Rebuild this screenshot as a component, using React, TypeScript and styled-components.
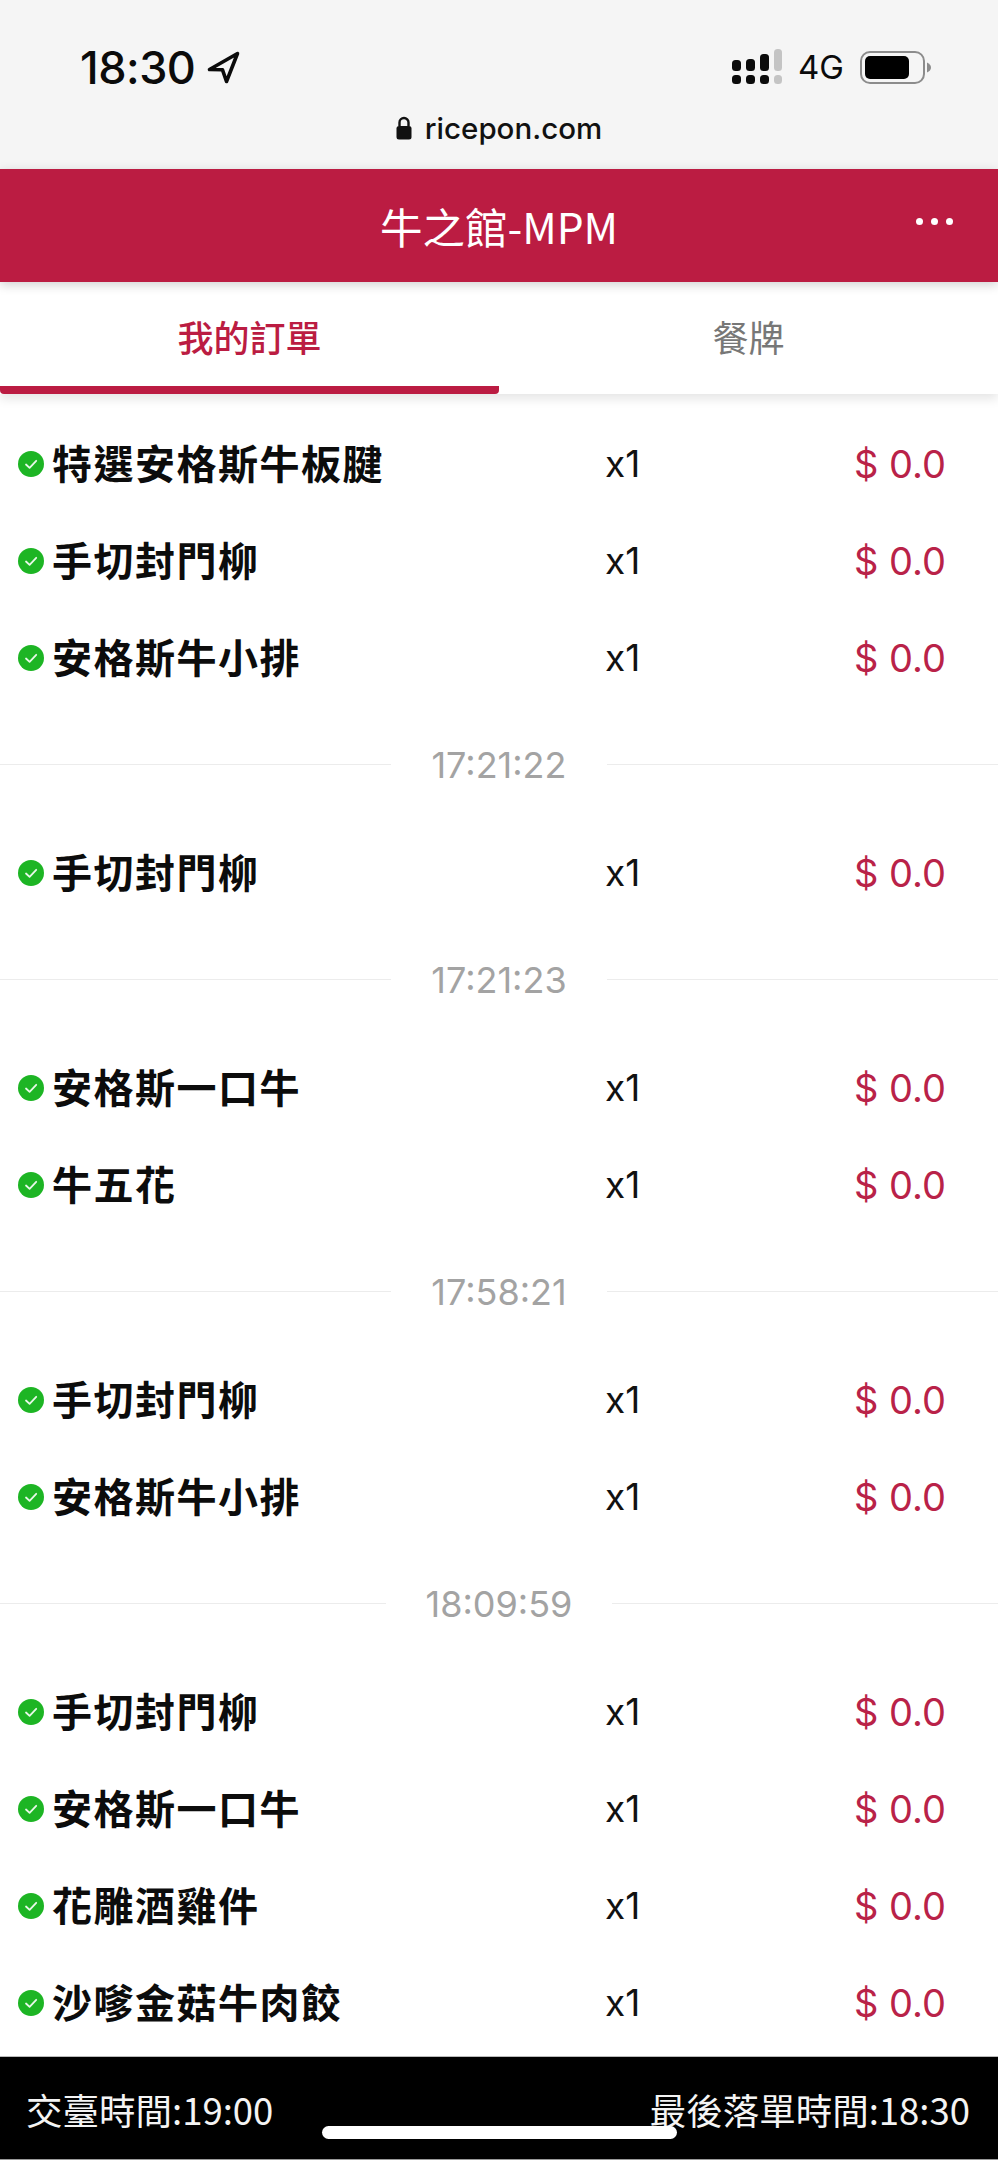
import React from "react"
import styled, { createGlobalStyle } from "styled-components"

const latin = `Inter, "Noto Sans CJK TC", sans-serif`
const cjk = `"Noto Sans CJK TC", Inter, sans-serif`
const red = "#bb1c42"

const GlobalStyle = createGlobalStyle`
  html, body {
    margin: 0;
    padding: 0;
    background: #fff;
  }
`

const Page = styled.div`
  width: 998px;
  height: 2160px;
  display: flex;
  flex-direction: column;
  overflow: hidden;
  position: relative;
  font-family: ${latin};
`

const BrowserChrome = styled.div`
  height: 169px;
  background: #f5f5f5;
  display: flex;
  flex-direction: column;
  flex: none;
`

const StatusRow = styled.div`
  height: 48px;
  margin-top: 43px;
  padding: 0 67px 0 80px;
  display: flex;
  align-items: center;
  justify-content: space-between;
`

const StatusGroup = styled.div`
  display: flex;
  align-items: center;
  gap: ${(props: { $gap: number }) => props.$gap}px;
`

const Clock = styled.span`
  font-size: 45px;
  font-weight: 500;
  color: #0b0b0b;
  letter-spacing: -0.5px;
`

const Network = styled.span`
  font-size: 33px;
  font-weight: 400;
  color: #0b0b0b;
`

const UrlRow = styled.div`
  margin-top: 19px;
  display: flex;
  justify-content: center;
  align-items: center;
  gap: 13px;
  font-size: 29.500px;
  font-weight: 500;
  color: #111;
`

const Header = styled.header`
  height: 113px;
  flex: none;
  background: ${red};
  color: #fff;
  position: relative;
  z-index: 2;
  display: flex;
  align-items: center;
  justify-content: center;
  box-shadow: 0 3px 10px rgba(0, 0, 0, 0.18);
`

const Title = styled.h1`
  margin: 0;
  font-family: ${cjk};
  font-size: 42.500px;
  font-weight: 400;
`

const MoreDots = styled.div`
  position: absolute;
  right: 45px;
  top: 49px;
  display: flex;
  gap: 8px;
`

const Dot = styled.span`
  width: 7px;
  height: 7px;
  border-radius: 50%;
  background: #fff;
`

const Tabs = styled.nav`
  height: 112px;
  flex: none;
  display: grid;
  grid-template-columns: 1fr 1fr;
  background: #fff;
  position: relative;
  z-index: 1;
  box-shadow: 0 5px 10px rgba(0, 0, 0, 0.1);
`

const Tab = styled.div<{ $active?: boolean }>`
  display: flex;
  align-items: center;
  justify-content: center;
  padding-top: 4px;
  font-family: ${cjk};
  font-size: 36px;
  font-weight: ${(props) => (props.$active ? 500 : 400)};
  color: ${(props) => (props.$active ? red : "#777")};
  border-bottom: 8px solid ${(props) => (props.$active ? red : "transparent")};
  border-radius: 0 0 4px 4px;
`

const OrderList = styled.main`
  padding-top: 21px;
  flex: 1;
`

const Row = styled.div`
  height: 97px;
  padding: 0 52px 0 18px;
  display: grid;
  grid-template-columns: 587px 1fr auto;
  align-items: center;
`

const ItemName = styled.div`
  display: flex;
  align-items: center;
  gap: 8px;
  font-family: ${cjk};
  font-size: 40px;
  letter-spacing: 1.500px;
  font-weight: 700;
  color: #0c0c0c;
`

const ItemLabel = styled.span`
  margin-bottom: 3px;
`

const Quantity = styled.span`
  font-size: 37px;
  color: #111;
`

const Price = styled.span`
  font-size: 38px;
  color: #b92248;
`

const Divider = styled.div`
  height: 118px;
  display: flex;
  align-items: center;
  gap: 40px;
  padding-bottom: 1px;
  box-sizing: border-box;

  &::before,
  &::after {
    content: "";
    flex: 1;
    height: 1px;
    background: #ececec;
  }
`

const DividerTime = styled.span`
  font-size: 36px;
  color: #a3a3a3;
`

const Footer = styled.footer`
  height: 104px;
  flex: none;
  box-sizing: border-box;
  background: #000;
  border-top: 1px solid #bbb;
  border-bottom: 1px solid #999;
  padding: 26px 28px 0 26px;
  display: flex;
  justify-content: space-between;
  align-items: flex-start;
  font-family: ${cjk};
  font-size: 36.500px;
  color: #f4f4f4;
  position: relative;
`

const HomeBar = styled.div`
  position: absolute;
  left: 322px;
  top: 69px;
  width: 355px;
  height: 13px;
  border-radius: 7px;
  background: #fff;
`

const CheckIcon = () => (
  <svg width="26" height="26" viewBox="0 0 26 26">
    <circle cx="13" cy="13" r="13" fill="#1db524" />
    <path d="M8 13.500l3.600 3.400L18.200 9.800" fill="none" stroke="#e8f8e8" strokeWidth="1.800" strokeLinecap="round" strokeLinejoin="round" />
  </svg>
)

const LocationArrow = () => (
  <svg width="33" height="33" viewBox="0 0 33 33">
    <path d="M30.500 2.500L2.500 18.500L15.500 18.800L19.500 30.500Z" fill="none" stroke="#0b0b0b" strokeWidth="3.600" strokeLinejoin="round" />
  </svg>
)

const SignalIcon = () => (
  <svg width="50" height="36" viewBox="0 0 50 36">
    <rect x="0" y="26" width="9" height="9" rx="3.500" fill="#0b0b0b" />
    <rect x="14" y="26" width="9" height="9" rx="3.500" fill="#0b0b0b" />
    <rect x="28" y="26" width="9" height="9" rx="3.500" fill="#0b0b0b" />
    <rect x="42" y="26" width="8" height="9" rx="3.500" fill="#c4c4c4" />
    <rect x="0" y="11" width="9" height="11" rx="3.500" fill="#0b0b0b" />
    <rect x="14" y="10" width="9" height="12" rx="3.500" fill="#0b0b0b" />
    <rect x="28" y="5" width="9" height="17" rx="3.500" fill="#0b0b0b" />
    <rect x="42" y="0" width="8" height="22" rx="3.500" fill="#c4c4c4" />
  </svg>
)

const BatteryIcon = () => (
  <svg width="71" height="33" viewBox="0 0 71 33">
    <rect x="1" y="1" width="63" height="31" rx="9" fill="none" stroke="#8c8c8c" strokeWidth="2" />
    <rect x="5" y="5" width="44" height="23" rx="5" fill="#000" />
    <path d="M67 11.500c2.500 1 4 3 4 5s-1.500 4-4 5z" fill="#8c8c8c" />
  </svg>
)

const LockIcon = () => (
  <svg width="16" height="24" viewBox="0 0 16 24">
    <path d="M3.500 10V6.500a4.500 4.500 0 0 1 9 0V10" fill="none" stroke="#111" strokeWidth="2.400" />
    <rect x="0.500" y="10" width="15" height="13.500" rx="2.500" fill="#111" />
  </svg>
)

const groups = [
  { time: "", items: ["特選安格斯牛板腱", "手切封門柳", "安格斯牛小排"] },
  { time: "17:21:22", items: ["手切封門柳"] },
  { time: "17:21:23", items: ["安格斯一口牛", "牛五花"] },
  { time: "17:58:21", items: ["手切封門柳", "安格斯牛小排"] },
  { time: "18:09:59", items: ["手切封門柳", "安格斯一口牛", "花雕酒雞件", "沙嗲金菇牛肉餃"] },
]

const App = () => {
  return (
    <Page>
      <GlobalStyle />
      <BrowserChrome>
        <StatusRow>
          <StatusGroup $gap={12}>
            <Clock>18:30</Clock>
            <LocationArrow />
          </StatusGroup>
          <StatusGroup $gap={16}>
            <SignalIcon />
            <Network>4G</Network>
            <BatteryIcon />
          </StatusGroup>
        </StatusRow>
        <UrlRow>
          <LockIcon />
          <span>ricepon.com</span>
        </UrlRow>
      </BrowserChrome>
      <Header>
        <Title>牛之館-MPM</Title>
        <MoreDots>
          <Dot />
          <Dot />
          <Dot />
        </MoreDots>
      </Header>
      <Tabs>
        <Tab $active>我的訂單</Tab>
        <Tab>餐牌</Tab>
      </Tabs>
      <OrderList>
        {groups.map((group) => (
          <section key={group.time}>
            {group.time && (
              <Divider>
                <DividerTime>{group.time}</DividerTime>
              </Divider>
            )}
            {group.items.map((item) => (
              <Row key={item}>
                <ItemName>
                  <CheckIcon />
                  <ItemLabel>{item}</ItemLabel>
                </ItemName>
                <Quantity>x1</Quantity>
                <Price>$ 0.0</Price>
              </Row>
            ))}
          </section>
        ))}
      </OrderList>
      <Footer>
        <span>交臺時間:19:00</span>
        <span>最後落單時間:18:30</span>
        <HomeBar />
      </Footer>
    </Page>
  )
}

export default App
